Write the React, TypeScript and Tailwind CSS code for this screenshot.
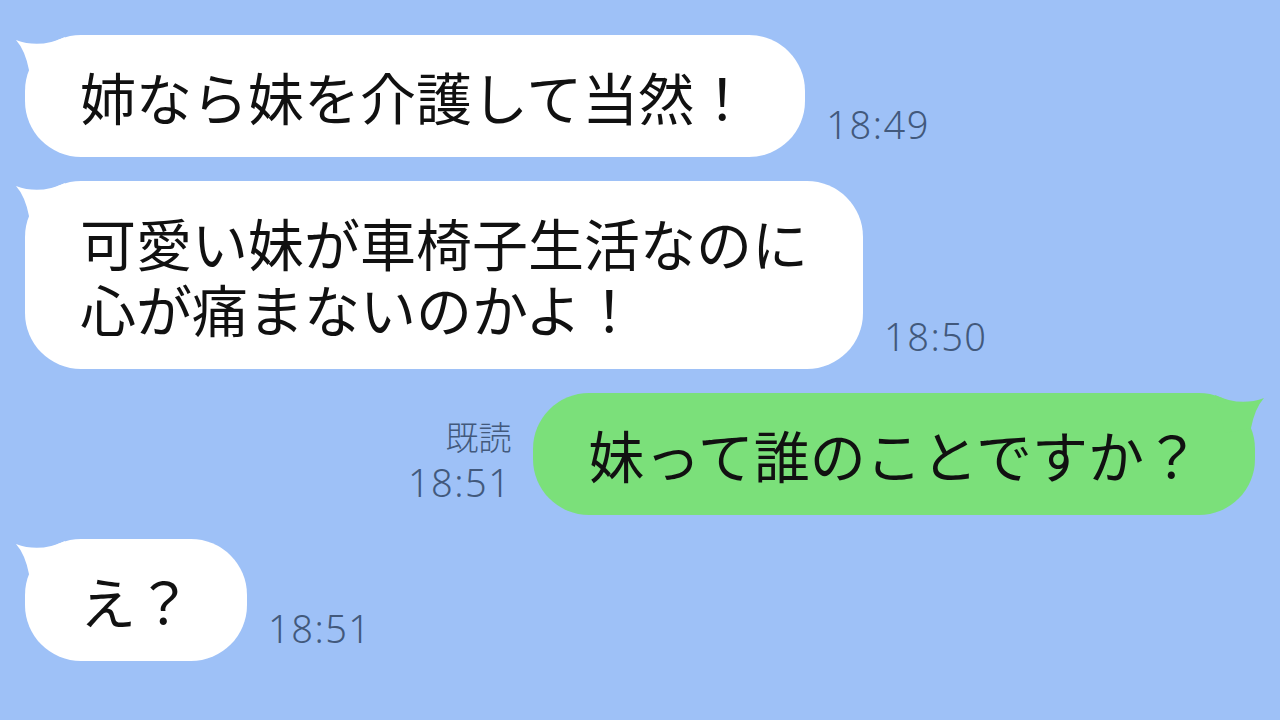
import React from 'react';

type Msg = {
  side: 'left' | 'right';
  lines: string[];
  time: string;
  read?: boolean;
};

const messages: Msg[] = [
  { side: 'left', lines: ['姉なら妹を介護して当然！'], time: '18:49' },
  { side: 'left', lines: ['可愛い妹が車椅子生活なのに', '心が痛まないのかよ！'], time: '18:50' },
  { side: 'right', lines: ['妹って誰のことですか？'], time: '18:51', read: true },
  { side: 'left', lines: ['え？'], time: '18:51' },
];

const jp = { fontFamily: '"Noto Sans CJK JP", "Noto Sans", sans-serif' };
const num = { fontFamily: '"Noto Sans", "Noto Sans CJK JP", sans-serif' };

const Tail: React.FC<{ side: 'left' | 'right'; color: string }> = ({ side, color }) => (
  <svg
    width="60"
    height="50"
    viewBox="0 0 60 50"
    className={side === 'left' ? 'absolute -left-[10px] top-0' : 'absolute -right-[10px] top-0 -scale-x-100'}
  >
    <path d="M 1 5 Q 25 14 50 2 L 40 40 L 14 35 Q 10 15 1 5 Z" fill={color} />
  </svg>
);

const Bubble: React.FC<{ msg: Msg }> = ({ msg }) => {
  const green = msg.side === 'right';
  return (
    <div
      className={`relative rounded-[56px] py-[28px] pl-[55px] pr-[55px] text-[56px] leading-[66px] text-[#111] ${
        green ? 'bg-[#7be07a]' : 'bg-white'
      }`}
      style={jp}
    >
      <Tail side={msg.side} color={green ? '#7be07a' : '#ffffff'} />
      <div className="relative">
        {msg.lines.map((l) => (
          <div key={l} className="whitespace-nowrap">
            {l}
          </div>
        ))}
      </div>
    </div>
  );
};

export default function App() {
  return (
    <div className="w-[1280px] h-[720px] overflow-hidden bg-[#9ec1f7] pt-[35px] flex flex-col gap-[24px]">
      {messages.map((m, i) =>
        m.side === 'left' ? (
          <div key={i} className="flex items-end gap-[21px] pl-[25px]">
            <Bubble msg={m} />
            <span className="mb-[14px] text-[38px] leading-none font-light tracking-[1.5px] text-[#42597c]" style={num}>
              {m.time}
            </span>
          </div>
        ) : (
          <div key={i} className="flex items-end justify-end gap-[22px] pr-[25px]">
            <div className="mb-[14px] flex flex-col items-end text-[#42597c] font-light">
              <span className="text-[33px] leading-none mb-[10px]" style={jp}>
                既読
              </span>
              <span className="text-[38px] leading-none tracking-[1.5px]" style={num}>
                {m.time}
              </span>
            </div>
            <Bubble msg={m} />
          </div>
        )
      )}
    </div>
  );
}
